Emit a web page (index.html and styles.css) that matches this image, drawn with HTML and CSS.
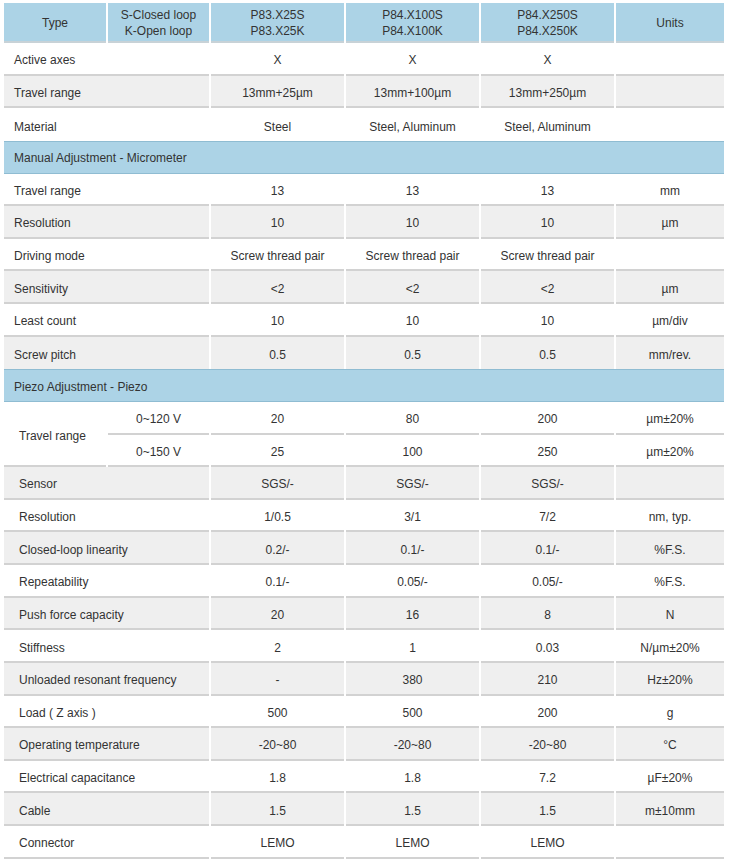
FILE: index.html
```html
<!DOCTYPE html>
<html lang="en">
<head>
<meta charset="utf-8">
<title>Specifications</title>
<link rel="stylesheet" href="styles.css">
</head>
<body>
<table class="spec">
  <colgroup>
    <col class="c1"><col class="c2"><col class="c3"><col class="c4"><col class="c5"><col class="c6">
  </colgroup>
  <thead>
    <tr class="head">
      <th>Type</th>
      <th>S-Closed loop<br>K-Open loop</th>
      <th>P83.X25S<br>P83.X25K</th>
      <th>P84.X100S<br>P84.X100K</th>
      <th>P84.X250S<br>P84.X250K</th>
      <th>Units</th>
    </tr>
  </thead>
  <tbody>
    <tr class="row"><td class="lab" colspan="2">Active axes</td><td>X</td><td>X</td><td>X</td><td></td></tr>
    <tr class="row alt"><td class="lab" colspan="2">Travel range</td><td>13mm+25µm</td><td>13mm+100µm</td><td>13mm+250µm</td><td></td></tr>
    <tr class="row pre"><td class="lab" colspan="2">Material</td><td>Steel</td><td>Steel, Aluminum</td><td>Steel, Aluminum</td><td></td></tr>
    <tr class="row sec"><td class="sect" colspan="6">Manual Adjustment - Micrometer</td></tr>
    <tr class="row"><td class="lab" colspan="2">Travel range</td><td>13</td><td>13</td><td>13</td><td>mm</td></tr>
    <tr class="row alt"><td class="lab" colspan="2">Resolution</td><td>10</td><td>10</td><td>10</td><td>µm</td></tr>
    <tr class="row"><td class="lab" colspan="2">Driving mode</td><td>Screw thread pair</td><td>Screw thread pair</td><td>Screw thread pair</td><td></td></tr>
    <tr class="row alt"><td class="lab" colspan="2">Sensitivity</td><td>&lt;2</td><td>&lt;2</td><td>&lt;2</td><td>µm</td></tr>
    <tr class="row"><td class="lab" colspan="2">Least count</td><td>10</td><td>10</td><td>10</td><td>µm/div</td></tr>
    <tr class="row alt pre"><td class="lab" colspan="2">Screw pitch</td><td>0.5</td><td>0.5</td><td>0.5</td><td>mm/rev.</td></tr>
    <tr class="row sec"><td class="sect" colspan="6">Piezo Adjustment - Piezo</td></tr>
    <tr class="row"><td class="lab2" rowspan="2">Travel range</td><td>0~120 V</td><td>20</td><td>80</td><td>200</td><td>µm±20%</td></tr>
    <tr class="row"><td>0~150 V</td><td>25</td><td>100</td><td>250</td><td>µm±20%</td></tr>
    <tr class="row alt"><td class="lab2" colspan="2">Sensor</td><td>SGS/-</td><td>SGS/-</td><td>SGS/-</td><td></td></tr>
    <tr class="row"><td class="lab2" colspan="2">Resolution</td><td>1/0.5</td><td>3/1</td><td>7/2</td><td>nm, typ.</td></tr>
    <tr class="row alt"><td class="lab2" colspan="2">Closed-loop linearity</td><td>0.2/-</td><td>0.1/-</td><td>0.1/-</td><td>%F.S.</td></tr>
    <tr class="row"><td class="lab2" colspan="2">Repeatability</td><td>0.1/-</td><td>0.05/-</td><td>0.05/-</td><td>%F.S.</td></tr>
    <tr class="row alt"><td class="lab2" colspan="2">Push force capacity</td><td>20</td><td>16</td><td>8</td><td>N</td></tr>
    <tr class="row"><td class="lab2" colspan="2">Stiffness</td><td>2</td><td>1</td><td>0.03</td><td>N/µm±20%</td></tr>
    <tr class="row alt"><td class="lab2" colspan="2">Unloaded resonant frequency</td><td>-</td><td>380</td><td>210</td><td>Hz±20%</td></tr>
    <tr class="row"><td class="lab2" colspan="2">Load ( Z axis )</td><td>500</td><td>500</td><td>200</td><td>g</td></tr>
    <tr class="row alt"><td class="lab2" colspan="2">Operating temperature</td><td>-20~80</td><td>-20~80</td><td>-20~80</td><td>°C</td></tr>
    <tr class="row"><td class="lab2" colspan="2">Electrical capacitance</td><td>1.8</td><td>1.8</td><td>7.2</td><td>µF±20%</td></tr>
    <tr class="row alt"><td class="lab2" colspan="2">Cable</td><td>1.5</td><td>1.5</td><td>1.5</td><td>m±10mm</td></tr>
    <tr class="row"><td class="lab2" colspan="2">Connector</td><td>LEMO</td><td>LEMO</td><td>LEMO</td><td></td></tr>
  </tbody>
</table>
</body>
</html>
```
FILE: styles.css
```css
html, body {
  margin: 0;
  padding: 0;
  background: #ffffff;
}
body {
  padding: 3px 0 0 2px;
  font-family: "Liberation Sans", Arial, sans-serif;
  font-size: 12px;
  color: #333333;
}
.spec {
  border-collapse: separate;
  border-spacing: 2px 0;
  table-layout: fixed;
  width: 724px;
  margin: 0;
}
.c1 { width: 102px; }
.c2 { width: 101px; }
.c3 { width: 133px; }
.c4 { width: 133px; }
.c5 { width: 133px; }
.c6 { width: 108px; }

.head { height: 40px; }
.head th {
  background: #acd3e6;
  font-weight: normal;
  line-height: 16px;
  text-align: center;
  vertical-align: middle;
  padding: 2px 0 0;
  border-bottom: 2px solid #c8d2d7;
}
.row { height: 32.64px; }
.row td {
  text-align: center;
  vertical-align: middle;
  padding: 4px 0 0;
  line-height: 14px;
  border-bottom: 2px solid #d2d2d2;
  white-space: nowrap;
}
.alt td { background: #efefef; }
.pre td { border-bottom: 0; }
.row td.lab {
  text-align: left;
  padding-left: 10px;
}
.row td.lab2 {
  text-align: left;
  padding-left: 15px;
}
.sec td.sect {
  background: #acd3e6;
  text-align: left;
  padding: 2px 0 0 10px;
  border-top: 1px solid #8fbcd2;
  border-bottom: 1px solid #8fbcd2;
}
```
